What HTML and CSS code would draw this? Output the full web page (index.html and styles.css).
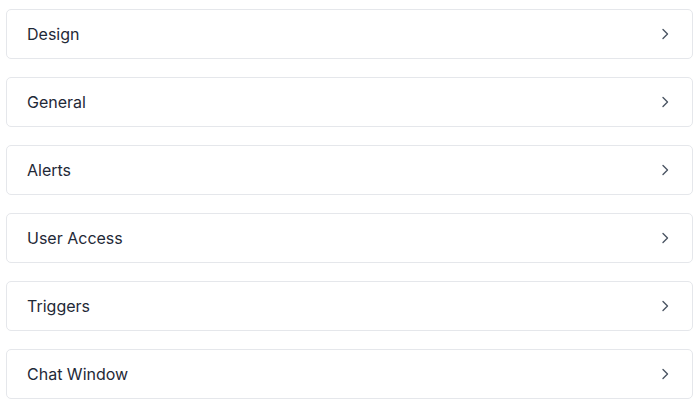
FILE: index.html
```html
<!DOCTYPE html>
<html lang="en">
<head>
    <meta charset="UTF-8">
    <meta name="viewport" content="width=device-width, initial-scale=1.0">
    <title>Settings</title>
    <link rel="stylesheet" href="styles.css">
</head>
<body>
    <div class="settings-list">
        <a class="settings-item" href="#">
            <span>Design</span>
            <svg class="chevron" viewBox="0 0 16 16"><path d="M6 3.5 10.5 8 6 12.5"/></svg>
        </a>
        <a class="settings-item" href="#">
            <span>General</span>
            <svg class="chevron" viewBox="0 0 16 16"><path d="M6 3.5 10.5 8 6 12.5"/></svg>
        </a>
        <a class="settings-item" href="#">
            <span>Alerts</span>
            <svg class="chevron" viewBox="0 0 16 16"><path d="M6 3.5 10.5 8 6 12.5"/></svg>
        </a>
        <a class="settings-item" href="#">
            <span>User Access</span>
            <svg class="chevron" viewBox="0 0 16 16"><path d="M6 3.5 10.5 8 6 12.5"/></svg>
        </a>
        <a class="settings-item" href="#">
            <span>Triggers</span>
            <svg class="chevron" viewBox="0 0 16 16"><path d="M6 3.5 10.5 8 6 12.5"/></svg>
        </a>
        <a class="settings-item" href="#">
            <span>Chat Window</span>
            <svg class="chevron" viewBox="0 0 16 16"><path d="M6 3.5 10.5 8 6 12.5"/></svg>
        </a>
    </div>
</body>
</html>
```

FILE: styles.css
```css
* {
    margin: 0;
    padding: 0;
    box-sizing: border-box;
}

body {
    font-family: Inter, "Noto Sans", sans-serif;
    background-color: #ffffff;
}

.settings-list {
    display: flex;
    flex-direction: column;
    gap: 18px;
    padding: 9px 6px;
}

.settings-item {
    display: flex;
    align-items: center;
    justify-content: space-between;
    height: 50px;
    padding: 0 19px 0 20px;
    border: 1px solid #e5e7eb;
    border-radius: 5px;
    color: #1f2937;
    font-size: 16px;
    text-decoration: none;
}

.chevron {
    width: 16px;
    height: 16px;
    fill: none;
    stroke: #4b5563;
    stroke-width: 1.4;
    stroke-linecap: round;
    stroke-linejoin: round;
}
```
